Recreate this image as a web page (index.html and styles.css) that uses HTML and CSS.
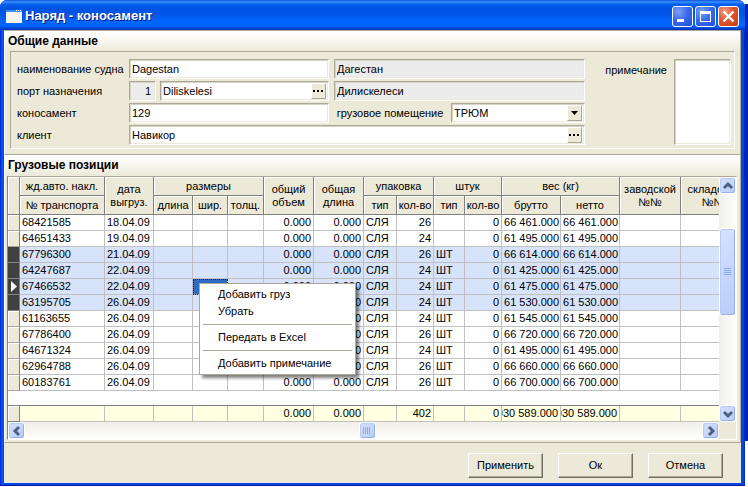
FILE: index.html
```html
<!DOCTYPE html>
<html lang="ru">
<head>
<meta charset="utf-8">
<title>Наряд - коносамент</title>
<link rel="stylesheet" href="styles.css">
</head>
<body>
<main class="window">
  <header class="titlebar">
    <svg class="app-icon" viewBox="0 0 16 13" aria-hidden="true"><path fill="#f4f3ee" d="M0 0h16v13H0z"/><path fill="#3a8ae8" d="M0 0h16v2H0z"/><path fill="#fff" d="M10 0h1v1h-1zM12 0h1v1h-1zM14 0h1v1h-1z"/></svg>
    <h1>Наряд - коносамент</h1>
    <button class="caption-btn" type="button" aria-label="Свернуть"><svg viewBox="0 0 17 17"><path fill="#fff" d="M3 11h7v3H3z"/></svg></button>
    <button class="caption-btn" type="button" aria-label="Развернуть"><svg viewBox="0 0 17 17"><path fill="#fff" fill-rule="evenodd" d="M3 3h11v11H3zM4 6v7h9V6z"/></svg></button>
    <button class="caption-btn close" type="button" aria-label="Закрыть"><svg viewBox="0 0 17 17"><path stroke="#fff" stroke-width="2.4" d="M3.5 3.5l10 10M13.5 3.5l-10 10"/></svg></button>
  </header>

  <section class="panel general">
    <h2>Общие данные</h2>
    <div class="group">
      <div class="fields">
        <div class="row">
          <label class="caption" for="ship">наименование судна</label>
          <input class="main" id="ship" value="Dagestan">
          <input class="grow gray" aria-label="Судно" readonly value="Дагестан">
        </div>
        <div class="row">
          <label class="caption" for="port">порт назначения</label>
          <div class="main split">
            <input class="code gray" aria-label="Код порта" readonly value="1">
            <div class="combo grow"><input id="port" value="Diliskelesi"><button type="button" aria-label="Выбрать порт"><svg viewBox="0 0 13 13"><path d="M1 5h2v2H1zM5 5h2v2H5zM9 5h2v2H9z"/></svg></button></div>
          </div>
          <input class="grow gray" aria-label="Порт" readonly value="Дилискелеси">
        </div>
        <div class="row">
          <label class="caption" for="bill">коносамент</label>
          <input class="main" id="bill" value="129">
          <label class="hold" for="hold">грузовое помещение</label>
          <div class="combo grow"><select id="hold"><option>ТРЮМ</option></select><span class="drop" aria-hidden="true"><svg viewBox="0 0 13 13"><path d="M3 5h7L6.5 9z"/></svg></span></div>
        </div>
        <div class="row">
          <label class="caption" for="client">клиент</label>
          <div class="combo grow"><input id="client" value="Навикор"><button type="button" aria-label="Выбрать клиента"><svg viewBox="0 0 13 13"><path d="M1 5h2v2H1zM5 5h2v2H5zM9 5h2v2H9z"/></svg></button></div>
        </div>
      </div>
      <label class="note-label" for="note">примечание</label>
      <textarea id="note"></textarea>
    </div>
  </section>

  <section class="panel cargo">
    <h2>Грузовые позиции</h2>
    <div class="grid">
      <div class="viewport">
        <table>
          <colgroup><col class="c-mark"><col class="c-num"><col class="c-date"><col class="c-len"><col class="c-wid"><col class="c-thk"><col class="c-sum"><col class="c-sum"><col class="c-type"><col class="c-qty"><col class="c-unit"><col class="c-qty"><col class="c-kg"><col class="c-kg"><col class="c-fac"><col class="c-store"></colgroup>
          <thead>
            <tr><th rowspan="2"></th><th>жд.авто. накл.</th><th rowspan="2">дата<br>выгруз.</th><th colspan="3">размеры</th><th rowspan="2">общий<br>объем</th><th rowspan="2">общая<br>длина</th><th colspan="2">упаковка</th><th colspan="2">штук</th><th colspan="2">вес (кг)</th><th rowspan="2">заводской<br>№№</th><th rowspan="2">складской<br>№№</th></tr>
            <tr><th>№ транспорта</th><th>длина</th><th>шир.</th><th>толщ.</th><th>тип</th><th>кол-во</th><th>тип</th><th>кол-во</th><th>брутто</th><th>нетто</th></tr>
          </thead>
          <tbody>
            <tr><th></th><td>68421585</td><td>18.04.09</td><td></td><td></td><td></td><td class="n">0.000</td><td class="n">0.000</td><td>СЛЯ</td><td class="n">26</td><td></td><td class="n">0</td><td class="n">66 461.000</td><td class="n">66 461.000</td><td></td><td></td></tr>
            <tr><th></th><td>64651433</td><td>19.04.09</td><td></td><td></td><td></td><td class="n">0.000</td><td class="n">0.000</td><td>СЛЯ</td><td class="n">24</td><td></td><td class="n">0</td><td class="n">61 495.000</td><td class="n">61 495.000</td><td></td><td></td></tr>
            <tr class="sel"><th></th><td>67796300</td><td>21.04.09</td><td></td><td></td><td></td><td class="n">0.000</td><td class="n">0.000</td><td>СЛЯ</td><td class="n">26</td><td>ШТ</td><td class="n">0</td><td class="n">66 614.000</td><td class="n">66 614.000</td><td></td><td></td></tr>
            <tr class="sel"><th></th><td>64247687</td><td>22.04.09</td><td></td><td></td><td></td><td class="n">0.000</td><td class="n">0.000</td><td>СЛЯ</td><td class="n">24</td><td>ШТ</td><td class="n">0</td><td class="n">61 425.000</td><td class="n">61 425.000</td><td></td><td></td></tr>
            <tr class="sel"><th><svg class="pointer" viewBox="0 0 6 11" aria-hidden="true"><path fill="#fff" d="M0 0l6 5.5L0 11z"/></svg></th><td>67466532</td><td>22.04.09</td><td></td><td class="active"></td><td></td><td class="n">0.000</td><td class="n">0.000</td><td>СЛЯ</td><td class="n">24</td><td>ШТ</td><td class="n">0</td><td class="n">61 475.000</td><td class="n">61 475.000</td><td></td><td></td></tr>
            <tr class="sel"><th></th><td>63195705</td><td>26.04.09</td><td></td><td></td><td></td><td class="n">0.000</td><td class="n">0.000</td><td>СЛЯ</td><td class="n">24</td><td>ШТ</td><td class="n">0</td><td class="n">61 530.000</td><td class="n">61 530.000</td><td></td><td></td></tr>
            <tr><th></th><td>61163655</td><td>26.04.09</td><td></td><td></td><td></td><td class="n">0.000</td><td class="n">0.000</td><td>СЛЯ</td><td class="n">24</td><td>ШТ</td><td class="n">0</td><td class="n">61 545.000</td><td class="n">61 545.000</td><td></td><td></td></tr>
            <tr><th></th><td>67786400</td><td>26.04.09</td><td></td><td></td><td></td><td class="n">0.000</td><td class="n">0.000</td><td>СЛЯ</td><td class="n">26</td><td>ШТ</td><td class="n">0</td><td class="n">66 720.000</td><td class="n">66 720.000</td><td></td><td></td></tr>
            <tr><th></th><td>64671324</td><td>26.04.09</td><td></td><td></td><td></td><td class="n">0.000</td><td class="n">0.000</td><td>СЛЯ</td><td class="n">24</td><td>ШТ</td><td class="n">0</td><td class="n">61 495.000</td><td class="n">61 495.000</td><td></td><td></td></tr>
            <tr><th></th><td>62964788</td><td>26.04.09</td><td></td><td></td><td></td><td class="n">0.000</td><td class="n">0.000</td><td>СЛЯ</td><td class="n">26</td><td>ШТ</td><td class="n">0</td><td class="n">66 660.000</td><td class="n">66 660.000</td><td></td><td></td></tr>
            <tr><th></th><td>60183761</td><td>26.04.09</td><td></td><td></td><td></td><td class="n">0.000</td><td class="n">0.000</td><td>СЛЯ</td><td class="n">26</td><td>ШТ</td><td class="n">0</td><td class="n">66 700.000</td><td class="n">66 700.000</td><td></td><td></td></tr>
          </tbody>
          <tfoot>
            <tr class="gap"><td colspan="16"></td></tr>
            <tr class="total"><th></th><td></td><td></td><td></td><td></td><td></td><td class="n">0.000</td><td class="n">0.000</td><td></td><td class="n">402</td><td></td><td class="n">0</td><td class="n"><span class="clip">030 589.000</span></td><td class="n"><span class="clip">030 589.000</span></td><td></td><td></td></tr>
          </tfoot>
        </table>
        <menu class="context">
          <li><button type="button">Добавить груз</button></li>
          <li><button type="button">Убрать</button></li>
          <li class="sep"></li>
          <li><button type="button">Передать в Excel</button></li>
          <li class="sep"></li>
          <li><button type="button">Добавить примечание</button></li>
        </menu>
      </div>
      <div class="scroll vertical">
        <button type="button" aria-label="Вверх"><svg viewBox="0 0 14 14"><path d="M3 9l4-4 4 4"/></svg></button>
        <span class="space-a"></span>
        <span class="thumb"><svg viewBox="0 0 8 8"><path d="M0 0h7v1H0zM0 2h7v1H0zM0 4h7v1H0zM0 6h7v1H0z"/></svg></span>
        <span class="space-b"></span>
        <button type="button" aria-label="Вниз"><svg viewBox="0 0 14 14"><path d="M3 5l4 4 4-4"/></svg></button>
      </div>
      <div class="scroll horizontal">
        <button type="button" aria-label="Влево"><svg viewBox="0 0 14 14"><path d="M9 3L5 7l4 4"/></svg></button>
        <span class="space-a"></span>
        <span class="thumb"><svg viewBox="0 0 8 8"><path d="M0 0h1v7H0zM2 0h1v7H2zM4 0h1v7H4zM6 0h1v7H6z"/></svg></span>
        <span class="space-b"></span>
        <button type="button" aria-label="Вправо"><svg viewBox="0 0 14 14"><path d="M5 3l4 4-4 4"/></svg></button>
      </div>
    </div>
  </section>

  <footer class="actions">
    <button type="button">Применить</button>
    <button type="button">Ок</button>
    <button type="button">Отмена</button>
  </footer>
</main>
<div class="behind"></div>
</body>
</html>
```
FILE: styles.css
```css
* { box-sizing: border-box; }

body {
  margin: 0;
  min-height: 100vh;
  display: flex;
  background: #fff;
  color: #000;
  font: 11px/13px "Liberation Sans", Arial, sans-serif;
}

button, input, select, textarea {
  font: inherit;
  color: inherit;
  margin: 0;
  padding: 0;
  border: 0;
  border-radius: 0;
  appearance: none;
  min-width: 0;
}

svg { display: block; }
h1, h2 { margin: 0; }

/* Window frame */
.window {
  flex: 1;
  min-width: 0;
  display: flex;
  flex-direction: column;
  padding: 0 4px 2px;
  background: linear-gradient(90deg, #0019cf, #0a5cf0 2px, #0046e0 4px, #0046e0 calc(100% - 4px), #0050e8 calc(100% - 2px), #001ca8);
  border-radius: 7px 7px 0 0;
  margin-bottom: 1px;
  border-bottom: 1px solid #001ca8;
}

.behind {
  width: 3px;
  margin: 4px 0 46px;
  background: linear-gradient(90deg, #001c96, #0030c8 2px, #00138c);
}

.titlebar {
  display: flex;
  align-items: center;
  gap: 2px;
  height: 30px;
  margin: 0 -4px;
  padding: 2px 6px 0 6px;
  border-radius: 7px 7px 0 0;
  background: linear-gradient(#0a50d8, #3c91ff 2px, #0562ee 4px, #0054e3 8px, #0055e5 14px, #0066ff 22px, #0066ff 26px, #0048d8 28px, #0036b8);
}

.titlebar h1 {
  flex: 1;
  padding-left: 1px;
  font-size: 13px;
  line-height: 16px;
  color: #fff;
  text-shadow: 1px 1px 0 #0a1883;
}

.app-icon { width: 16px; height: 13px; }

.caption-btn {
  width: 21px;
  height: 21px;
  padding: 1px;
  border: 1px solid #fff;
  border-radius: 3px;
  background: radial-gradient(circle at 30% 25%, #7d9ff5, #3a6cee 45%, #1d4cd6);
}

.caption-btn svg { width: 17px; height: 17px; }
.caption-btn.close { background: radial-gradient(circle at 30% 25%, #f0a088, #e0552f 45%, #c43c14); }

/* Panels */
.panel {
  background: #ece9d8;
  border-top: 1px solid #aca899;
  border-right: 1px solid #aca899;
  border-left: 1px solid #fff;
}

.panel h2 {
  height: 20px;
  padding: 0 3px;
  font-size: 12px;
  line-height: 20px;
  background: linear-gradient(#fff, #fcfbf8 6px, #ece9d8);
}

.group {
  display: flex;
  margin: 0 5px 5px;
  padding: 7px 3px 3px 6px;
  border: 1px solid #aca899;
  border-right-color: #fff;
  border-bottom-color: #fff;
}

.fields {
  flex: 1;
  display: flex;
  flex-direction: column;
  gap: 2px;
}

.row { display: flex; align-items: center; gap: 5px; }
.caption { width: 107px; white-space: nowrap; }
.main { width: 200px; }
.grow { flex: 1; }
.split { display: flex; gap: 4px; }
.hold { width: 112px; text-align: center; white-space: nowrap; }

.fields .row > input, .code, .combo, textarea {
  height: 20px;
  padding: 0 2px;
  border: 1px solid #aca899;
  border-right-color: #fff;
  border-bottom-color: #fff;
  background: #fff;
  box-shadow: inset 1px 1px #d8d4c4, inset -1px -1px #ece9d8;
}

.fields .row .gray { background: #ececec; }
.fields .code { width: 27px; padding-right: 4px; text-align: right; }

.combo { display: flex; align-items: center; }
.combo input, .combo select { flex: 1; height: 16px; background: none; }

.combo button, .drop {
  width: 15px;
  height: 16px;
  background: #ece9d8;
  border: 1px solid #fff;
  border-right-color: #aca899;
  border-bottom-color: #aca899;
}

.combo button svg, .drop svg { width: 13px; height: 13px; }
.drop { pointer-events: none; }

.note-label { margin: 5px 7px 0 20px; }
textarea { width: 57px; height: 86px; resize: none; }

/* Cargo grid */
.cargo { border-bottom: 1px solid #aca899; padding: 0 3px 2px 2px; }
.cargo h2 { height: 21px; margin: 0 -3px 0 -2px; line-height: 21px; }

.grid {
  display: grid;
  grid-template-columns: minmax(0, 1fr) 17px;
  grid-template-rows: auto 17px;
  background: #ece9d8;
  border: 1px solid #848284;
  border-top-color: #aca899;
  border-right-color: #fff;
  border-bottom-color: #fff;
}

.viewport { position: relative; overflow: hidden; background: #fff; }

table {
  width: 739px;
  table-layout: fixed;
  border-collapse: separate;
  border-spacing: 0;
}

.c-mark { width: 12px; }
.c-num { width: 85px; }
.c-date { width: 49px; }
.c-len { width: 39px; }
.c-wid { width: 35px; }
.c-thk { width: 36px; }
.c-sum { width: 50px; }
.c-type { width: 33px; }
.c-qty { width: 37px; }
.c-unit { width: 31px; }
.c-kg { width: 59px; }
.c-fac { width: 61px; }
.c-store { width: 66px; }

th, td {
  height: 16px;
  padding: 0 2px;
  line-height: 15px;
  white-space: nowrap;
  border-right: 1px solid #c0c0c0;
  border-bottom: 1px solid #c0c0c0;
}

th {
  padding: 0;
  font-weight: normal;
  background: #ece9d8;
  border-color: #808080;
  box-shadow: inset 1px 1px #fff;
}

thead th { height: 19px; line-height: 13px; }
tbody th { border-bottom-color: #aca899; }
.n { text-align: right; }
.sel td { background: #d6e3fb; }
.sel th { background: #404040; border-bottom-color: #848284; box-shadow: none; }
.pointer { width: 6px; height: 11px; margin-left: 3px; }
.sel .active { background: #316ac5; outline: 1px dotted #302000; outline-offset: -1px; }
.gap td { height: 15px; border: 0; border-bottom: 1px solid #808080; }
.total td { background: #ffffe1; padding-left: 0; }
.clip { display: flex; justify-content: flex-end; overflow: hidden; }

/* Context menu */
.context {
  position: absolute;
  left: 191px;
  top: 106px;
  width: 157px;
  margin: 0;
  padding: 2px 3px;
  list-style: none;
  background: #fff;
  border: 1px solid #aca899;
  box-shadow: 3px 3px 3px rgba(0, 0, 0, 0.5);
}

.context button {
  display: block;
  width: 100%;
  height: 17px;
  padding-left: 15px;
  text-align: left;
  white-space: nowrap;
  background: none;
}

.context .sep { height: 1px; margin: 4px 0; background: #aca899; }

/* Scroll bars */
.scroll { display: flex; background: linear-gradient(90deg, #f0efe8, #fefefb); }
.vertical { flex-direction: column; }
.horizontal { background: linear-gradient(#f0efe8, #fefefb); }

.scroll button, .thumb {
  display: flex;
  align-items: center;
  justify-content: center;
  flex: 0 0 17px;
  border: 1px solid #fff;
  border-radius: 3px;
  background: linear-gradient(135deg, #d6e2fe, #b8ccf8);
  box-shadow: inset -1px -1px #98b0e8, inset 1px 1px #b8cbf8;
}

.scroll button svg { width: 14px; height: 14px; fill: none; stroke: #4d6185; stroke-width: 3; }
.thumb svg { width: 8px; height: 8px; fill: #8caaee; shape-rendering: crispEdges; }
.vertical .thumb { flex-basis: 88px; }
.vertical .space-a { flex: 34; }
.vertical .space-b { flex: 89; }
.horizontal .space-a { flex: 334; }
.horizontal .space-b { flex: 327; }

/* Bottom buttons */
.actions {
  flex: 1;
  display: flex;
  justify-content: flex-end;
  align-items: flex-start;
  gap: 15px;
  padding: 10px 18px 5px;
  background: #ece9d8;
}

.actions button {
  width: 75px;
  height: 25px;
  background: #ece9d8;
  border: 1px solid #fff;
  border-right-color: #716f64;
  border-bottom-color: #716f64;
  box-shadow: inset -1px -1px #aca899;
}
```
